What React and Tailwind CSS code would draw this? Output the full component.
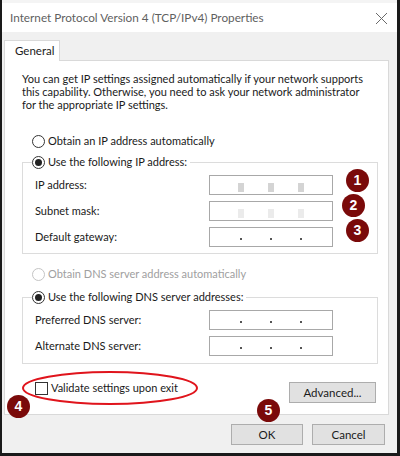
import React from "react";

const font = { fontFamily: 'Lato, "Noto Sans", sans-serif' };

function Radio({ checked, disabled }) {
  return (
    <span
      className={`flex h-[13px] w-[13px] shrink-0 items-center justify-center rounded-full border bg-white ${
        disabled ? "border-[#c4c4c4]" : "border-[#333333]"
      }`}
    >
      {checked && <span className="h-[7px] w-[7px] rounded-full bg-[#222222]" />}
    </span>
  );
}

function IpBox({ variant }) {
  return (
    <div className="flex h-[20px] w-[124px] items-center justify-center gap-[24px] border border-[#a8a8a8] bg-white">
      {[0, 1, 2].map((i) =>
        variant === "blur1" ? (
          <span key={i} className="mt-[5px] h-[9px] w-[6px] bg-[#d4d4d4]" />
        ) : variant === "blur2" ? (
          <span key={i} className="mt-[5px] h-[9px] w-[6px] bg-[#ebebeb]" />
        ) : (
          <span key={i} className="mx-[2px] mt-[3px] h-[2px] w-[2px] bg-[#555555]" />
        )
      )}
    </div>
  );
}

function Row({ label, variant }) {
  return (
    <div className="flex h-[20px] items-center">
      <span className="w-[186px] pl-[12px] text-[#1a1a1a]">{label}</span>
      <IpBox variant={variant} />
    </div>
  );
}

function Badge({ n, className }) {
  return (
    <div
      className={`absolute flex h-[23px] w-[23px] items-center justify-center rounded-full bg-[#7a0a0a] text-[14px] font-bold text-white ${className}`}
      style={{ fontFamily: '"Liberation Sans", Arial, sans-serif' }}
    >
      {n}
    </div>
  );
}

export default function App() {
  return (
    <div
      className="relative flex h-[456px] w-[400px] flex-col border-b-[3px] border-l-[2px] border-r-[3px] border-[#1a1a1a] bg-white"
      style={font}
    >
      <div className="h-[3px] bg-[#f4f4f4]" />
      <div className="flex h-[29px] items-center justify-between bg-white pl-[8px] pr-[9px]">
        <span className="text-[11.75px] text-[#5f5f5f]">Internet Protocol Version 4 (TCP/IPv4) Properties</span>
        <svg width="13" height="13" viewBox="0 0 13 13" className="mt-[2px]">
          <path d="M1 1 L12 12 M12 1 L1 12" stroke="#6a6a6a" strokeWidth="1" />
        </svg>
      </div>
      <div className="flex flex-1 flex-col bg-[#f0f0f0] pl-[2px] pr-[8px] pt-[8px] text-[11px]">
        <div className="relative z-10 -mb-px flex h-[21px] w-[56px] items-center border border-b-0 border-[#d9d9d9] bg-white pl-[10px] text-[11.5px] text-[#1a1a1a]">
          General
        </div>
        <div className="relative flex h-[355px] flex-col border border-[#d9d9d9] bg-white pl-[17px] pr-[10px] pt-[11px] text-[#1a1a1a]">
          <p className="whitespace-nowrap leading-[13px]">
            You can get IP settings assigned automatically if your network supports
            <br />
            this capability. Otherwise, you need to ask your network administrator
            <br />
            for the appropriate IP settings.
          </p>
          <div className="ml-[10px] mt-[23px] flex h-[14px] items-center gap-[3px]">
            <Radio />
            <span>Obtain an IP address automatically</span>
          </div>
          <fieldset className="mt-[7px] border border-[#dcdcdc] pb-[6px]">
            <legend className="ml-[9px] flex h-[14px] items-center gap-[3px] bg-white pr-[3px]">
              <Radio checked />
              <span>Use the following IP address:</span>
            </legend>
            <div className="flex flex-col gap-[6px] pt-[6px]">
              <Row label="IP address:" variant="blur1" />
              <Row label="Subnet mask:" variant="blur2" />
              <Row label="Default gateway:" />
            </div>
          </fieldset>
          <div className="ml-[10px] mt-[13px] flex h-[14px] items-center gap-[3px] text-[#a0a0a0]">
            <Radio disabled />
            <span>Obtain DNS server address automatically</span>
          </div>
          <fieldset className="mt-[9px] border border-[#dcdcdc] pb-[7px]">
            <legend className="ml-[9px] flex h-[14px] items-center gap-[3px] bg-white pr-[3px]">
              <Radio checked />
              <span>Use the following DNS server addresses:</span>
            </legend>
            <div className="flex flex-col gap-[6px] pt-[6px]">
              <Row label="Preferred DNS server:" />
              <Row label="Alternate DNS server:" />
            </div>
          </fieldset>
          <div className="mt-[18px] flex items-start justify-between pr-[2px]">
            <div className="ml-[13px] flex h-[13px] items-center gap-[3px]">
              <span className="h-[13px] w-[13px] border border-[#333333] bg-white" />
              <span>Validate settings upon exit</span>
            </div>
            <button className="flex h-[21px] w-[87px] items-center justify-center border border-[#adadad] bg-[#e1e1e1] text-[11.5px] text-[#1a1a1a]">
              Advanced...
            </button>
          </div>
          <svg className="absolute left-[16px] top-[309px]" width="178" height="36" viewBox="0 0 178 36">
            <ellipse cx="89" cy="18" rx="87" ry="16" fill="none" stroke="#e0141c" strokeWidth="2" />
          </svg>
        </div>
        <div className="mr-[-2px] mt-[9px] flex justify-end gap-[9px] pr-[6px]">
          <button className="flex h-[21px] w-[72px] items-center justify-center border border-[#adadad] bg-[#e1e1e1] text-[11.5px] text-[#1a1a1a]">
            OK
          </button>
          <button className="flex h-[21px] w-[73px] items-center justify-center border border-[#adadad] bg-[#e1e1e1] text-[11.5px] text-[#1a1a1a]">
            Cancel
          </button>
        </div>
      </div>
      <Badge n="1" className="left-[344px] top-[169px]" />
      <Badge n="2" className="left-[340px] top-[194px]" />
      <Badge n="3" className="left-[344px] top-[219px]" />
      <Badge n="4" className="left-[5px] top-[395px]" />
      <Badge n="5" className="left-[255px] top-[399px]" />
    </div>
  );
}
